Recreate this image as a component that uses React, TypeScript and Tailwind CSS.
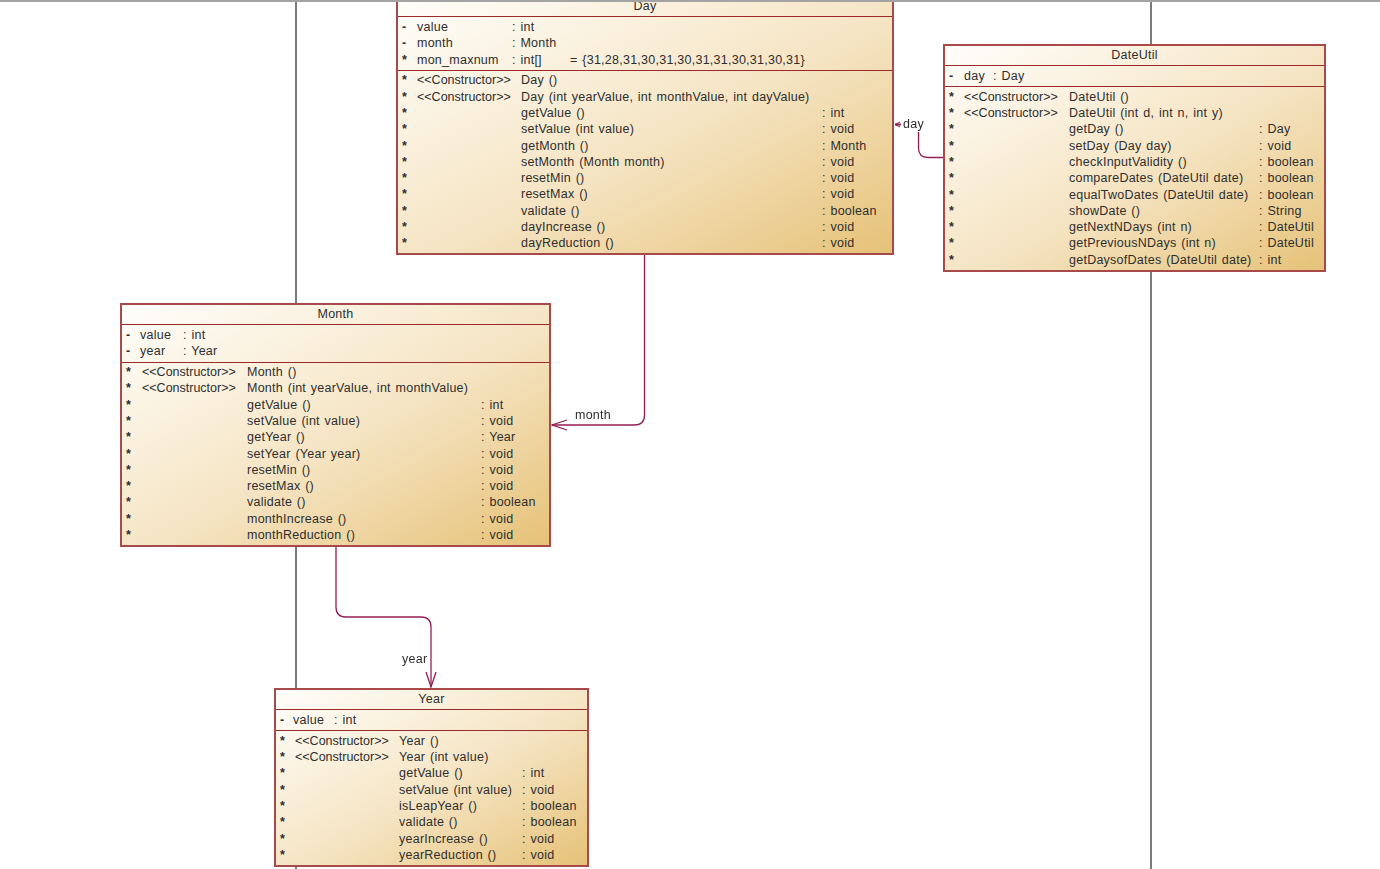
const dayAttrs = [
  ["-", "value", ": int", ""],
  ["-", "month", ": Month", ""],
  ["*", "mon_maxnum", ": int[]", "= {31,28,31,30,31,30,31,31,30,31,30,31}"],
];
const dayOps = [
  ["<<Constructor>>", "Day ()", ""],
  ["<<Constructor>>", "Day (int yearValue, int monthValue, int dayValue)", ""],
  ["", "getValue ()", ": int"],
  ["", "setValue (int value)", ": void"],
  ["", "getMonth ()", ": Month"],
  ["", "setMonth (Month month)", ": void"],
  ["", "resetMin ()", ": void"],
  ["", "resetMax ()", ": void"],
  ["", "validate ()", ": boolean"],
  ["", "dayIncrease ()", ": void"],
  ["", "dayReduction ()", ": void"],
];
const dateUtilAttrs = [["-", "day", ": Day", ""]];
const dateUtilOps = [
  ["<<Constructor>>", "DateUtil ()", ""],
  ["<<Constructor>>", "DateUtil (int d, int n, int y)", ""],
  ["", "getDay ()", ": Day"],
  ["", "setDay (Day day)", ": void"],
  ["", "checkInputValidity ()", ": boolean"],
  ["", "compareDates (DateUtil date)", ": boolean"],
  ["", "equalTwoDates (DateUtil date)", ": boolean"],
  ["", "showDate ()", ": String"],
  ["", "getNextNDays (int n)", ": DateUtil"],
  ["", "getPreviousNDays (int n)", ": DateUtil"],
  ["", "getDaysofDates (DateUtil date)", ": int"],
];
const monthAttrs = [
  ["-", "value", ": int", ""],
  ["-", "year", ": Year", ""],
];
const monthOps = [
  ["<<Constructor>>", "Month ()", ""],
  ["<<Constructor>>", "Month (int yearValue, int monthValue)", ""],
  ["", "getValue ()", ": int"],
  ["", "setValue (int value)", ": void"],
  ["", "getYear ()", ": Year"],
  ["", "setYear (Year year)", ": void"],
  ["", "resetMin ()", ": void"],
  ["", "resetMax ()", ": void"],
  ["", "validate ()", ": boolean"],
  ["", "monthIncrease ()", ": void"],
  ["", "monthReduction ()", ": void"],
];
const yearAttrs = [["-", "value", ": int", ""]];
const yearOps = [
  ["<<Constructor>>", "Year ()", ""],
  ["<<Constructor>>", "Year (int value)", ""],
  ["", "getValue ()", ": int"],
  ["", "setValue (int value)", ": void"],
  ["", "isLeapYear ()", ": boolean"],
  ["", "validate ()", ": boolean"],
  ["", "yearIncrease ()", ": void"],
  ["", "yearReduction ()", ": void"],
];

function ClassBox({
  title,
  attrs,
  ops,
  place,
  attrCols,
  opCols,
}: {
  title: string;
  attrs: string[][];
  ops: string[][];
  place: string;
  attrCols: string;
  opCols: string;
}) {
  return (
    <div
      className={`absolute ${place} border-2 border-[#a84a4a] bg-linear-to-br from-[#fffefb] via-[#f5e4c2] via-55% to-[#e6c277]`}
    >
      <div className="h-[20px] border-b border-[#9c2a2a] text-center leading-[19px]">{title}</div>
      <div className={`grid ${attrCols} border-b border-[#9c2a2a] pl-[4px] pt-[2px] pb-[2px] leading-[16.3px]`}>
        {attrs.map((a) => (
          <div key={a[1]} className="contents">
            <span className="font-bold">{a[0]}</span>
            <span>{a[1]}</span>
            <span>{a[2]}</span>
            <span>{a[3]}</span>
          </div>
        ))}
      </div>
      <div className={`grid ${opCols} pl-[4px] pt-[1.5px] pb-[1.5px] leading-[16.3px]`}>
        {ops.map((o) => (
          <div key={o[1]} className="contents">
            <span className="font-bold">*</span>
            <span className="tracking-normal [word-spacing:0]">{o[0]}</span>
            <span>{o[1]}</span>
            <span>{o[2]}</span>
          </div>
        ))}
      </div>
    </div>
  );
}

function Connectors() {
  return (
    <svg className="absolute inset-0" width="1380" height="869" fill="none">
      <g stroke="#4f4f4f" strokeWidth="1.5">
        <path d="M296 0V869" />
        <path d="M1151 0V869" />
      </g>
      <g stroke="#941f55" strokeWidth="1.3">
        <path d="M644.5 253V415Q644.5 425 634.5 425H552" />
        <path d="M567 420L552 425L567 430" />
        <path d="M943 157.500H928Q918.500 157.500 918.500 148V132" />
        <path d="M901 124.500H895" strokeWidth="2" />
        <path d="M900 122L895 124.500L900 127" strokeWidth="1" />
        <path d="M336 546V607Q336 617 346 617H421Q431 617 431 627V687" />
        <path d="M426 672L431 687L436 672" />
      </g>
    </svg>
  );
}

export default function App() {
  return (
    <div className="relative h-[869px] w-[1380px] overflow-hidden bg-white font-['Liberation_Sans',sans-serif] text-[12.5px] tracking-[0.25px] text-[#2e2e2e] [word-spacing:1px]">
      <Connectors />
      <div className="blur-[0.35px]">
        <ClassBox
          title="Day"
          attrs={dayAttrs}
          ops={dayOps}
          place="left-[396px] top-[-5px] w-[498px]"
          attrCols="grid-cols-[15px_95px_58px_1fr]"
          opCols="grid-cols-[15px_104px_301px_1fr]"
        />
        <ClassBox
          title="DateUtil"
          attrs={dateUtilAttrs}
          ops={dateUtilOps}
          place="left-[943px] top-[44px] w-[383px]"
          attrCols="grid-cols-[15px_29px_60px_1fr]"
          opCols="grid-cols-[15px_105px_190px_1fr]"
        />
        <ClassBox
          title="Month"
          attrs={monthAttrs}
          ops={monthOps}
          place="left-[120px] top-[303px] w-[431px]"
          attrCols="grid-cols-[14px_43px_60px_1fr]"
          opCols="grid-cols-[16px_105px_234px_1fr]"
        />
        <ClassBox
          title="Year"
          attrs={yearAttrs}
          ops={yearOps}
          place="left-[274px] top-[688px] w-[315px]"
          attrCols="grid-cols-[13px_41px_60px_1fr]"
          opCols="grid-cols-[15px_104px_123px_1fr]"
        />
        <span className="absolute left-[903px] top-[115px]">day</span>
        <span className="absolute left-[575px] top-[406px]">month</span>
        <span className="absolute left-[402px] top-[650px]">year</span>
      </div>
      <div className="absolute inset-x-0 top-0 h-[2px] bg-[#a3a3a3]" />
    </div>
  );
}
